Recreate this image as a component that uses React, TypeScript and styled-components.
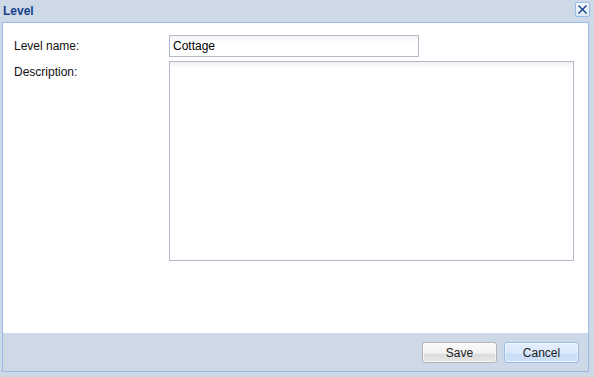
import styled, { createGlobalStyle } from "styled-components";

const GlobalStyle = createGlobalStyle`
  html, body {
    margin: 0;
    padding: 0;
    background: #ced9e7;
  }
  body {
    font-family: Tahoma, "Liberation Sans", Arial, sans-serif;
  }
`;

const Window = styled.div`
  width: 594px;
  height: 377px;
  box-sizing: border-box;
  background: #ced9e7;
  padding: 0 5px 5px 2px;
  display: flex;
  flex-direction: column;
`;

const Header = styled.div`
  height: 22px;
  display: flex;
  align-items: center;
  justify-content: space-between;
  padding-left: 1px;
`;

const Title = styled.span`
  font-family: "Liberation Sans", Arial, sans-serif;
  font-weight: bold;
  font-size: 12px;
  color: #15428b;
  margin-top: -1px;
`;

const CloseTool = styled.button`
  width: 15px;
  height: 15px;
  padding: 0;
  margin-right: -1px;
  margin-top: -3px;
  border: 1px solid #99bbe8;
  border-radius: 2px;
  background: linear-gradient(#f3f7fc, #dde8f6);
  display: flex;
  align-items: center;
  justify-content: center;
  cursor: pointer;
`;

const Frame = styled.div`
  flex: 1;
  border: 1px solid #99bbe8;
  display: flex;
  flex-direction: column;
  min-height: 0;
`;

const Body = styled.div`
  flex: 1;
  background: #fff;
  padding: 12px 0 0 11px;
  display: grid;
  grid-template-columns: 155px 1fr;
  grid-auto-rows: min-content;
  row-gap: 4px;
`;

const Label = styled.label`
  font-family: "Liberation Sans", Arial, sans-serif;
  font-size: 12px;
  color: #111;
  padding-top: 4px;
`;

const TextInput = styled.input`
  box-sizing: border-box;
  width: 250px;
  height: 22px;
  border: 1px solid #b5b8c8;
  background: linear-gradient(#f2f2f2, #fff 6px);
  padding: 0 4px 0 3px;
  font-family: "Liberation Sans", Arial, sans-serif;
  font-size: 12px;
  color: #000;
  outline: none;
`;

const TextArea = styled.textarea`
  box-sizing: border-box;
  width: 405px;
  height: 200px;
  border: 1px solid #b5b8c8;
  background: linear-gradient(#f2f2f2, #fff 6px);
  resize: none;
  outline: none;
  font-family: "Liberation Sans", Arial, sans-serif;
  font-size: 12px;
`;

const Footer = styled.div`
  height: 38px;
  display: flex;
  justify-content: flex-end;
  align-items: flex-start;
  gap: 7px;
  padding: 9px 9px 0 0;
  box-sizing: border-box;
`;

const Button = styled.button<{ $active?: boolean }>`
  width: 75px;
  height: 21px;
  box-sizing: border-box;
  border-radius: 3px;
  padding: 0;
  font-family: "Liberation Sans", Arial, sans-serif;
  font-size: 12px;
  color: #222;
  cursor: pointer;
  border: 1px solid ${(p) => (p.$active ? "#99bbe8" : "#b4b4b4")};
  background: ${(p) =>
    p.$active
      ? "linear-gradient(#e4effd 0, #d9e8fb 55%, #c6dcf6 56%, #cfe1f8 100%)"
      : "linear-gradient(#fbfbfb 0, #f1f1f1 55%, #dcdcdc 56%, #e6e6e6 100%)"};
  box-shadow: inset 0 0 0 1px rgba(255, 255, 255, 0.6);
`;

export default function App() {
  return (
    <>
      <GlobalStyle />
      <Window>
        <Header>
          <Title>Level</Title>
          <CloseTool aria-label="Close">
            <svg width="11" height="11" viewBox="0 0 11 11">
              <path
                d="M1.5 1.5 L9.5 9.5 M9.5 1.5 L1.5 9.5"
                stroke="#15428b"
                strokeWidth="1.4"
                fill="none"
              />
            </svg>
          </CloseTool>
        </Header>
        <Frame>
          <Body>
            <Label>Level name:</Label>
            <TextInput defaultValue="Cottage" />
            <Label>Description:</Label>
            <TextArea />
          </Body>
          <Footer>
            <Button>Save</Button>
            <Button $active>Cancel</Button>
          </Footer>
        </Frame>
      </Window>
    </>
  );
}
